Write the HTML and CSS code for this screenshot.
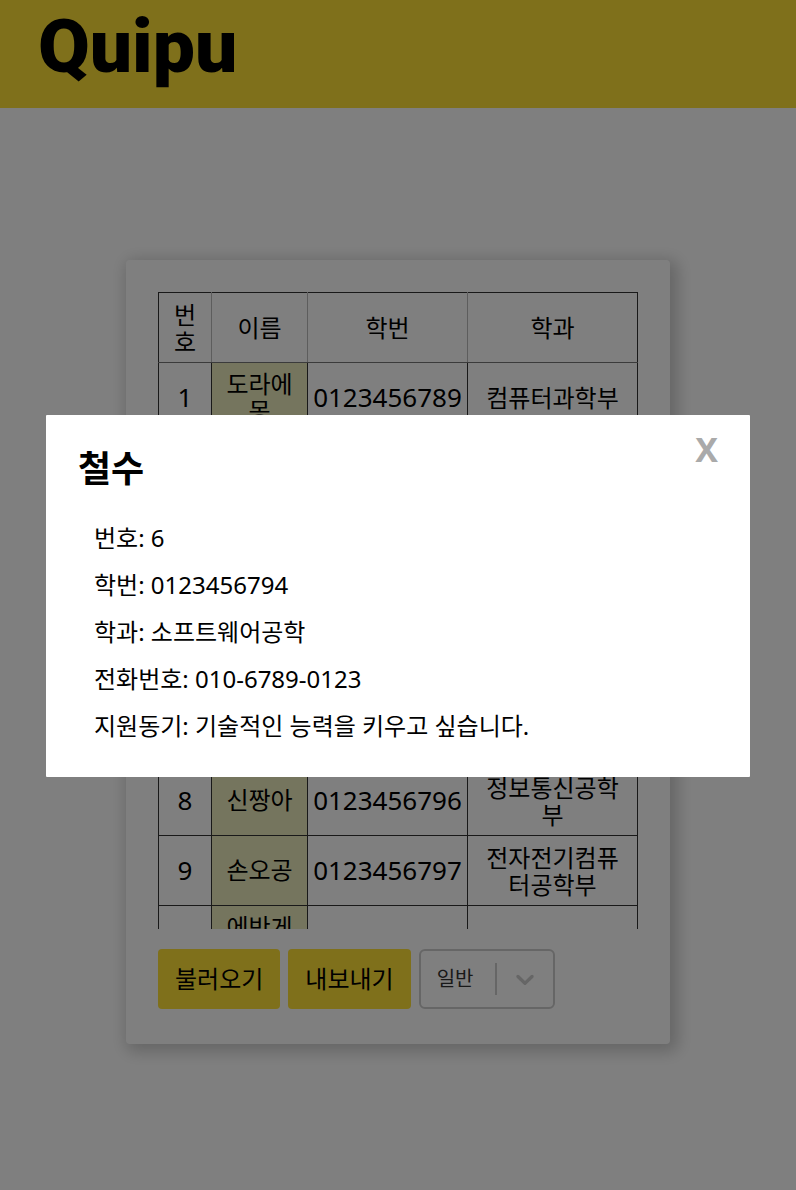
FILE: index.html
```html
<!DOCTYPE html>
<html lang="ko">
<head>
<meta charset="utf-8">
<meta name="viewport" content="width=device-width, initial-scale=1">
<title>Quipu</title>
<link rel="stylesheet" href="styles.css">
</head>
<body>
<header class="site-header"><h1 class="logo">Quipu</h1></header>
<main class="page">
  <section class="card">
    <div class="table-scroll">
      <table class="members">
        <colgroup><col class="col-no"><col class="col-name"><col class="col-id"><col class="col-dept"></colgroup>
        <thead>
          <tr class="tall"><th>번호</th><th>이름</th><th>학번</th><th>학과</th></tr>
        </thead>
        <tbody>
          <tr class="tall"><td class="num">1</td><td class="name">도라에몽</td><td class="num">0123456789</td><td>컴퓨터과학부</td></tr>
          <tr class="tall"><td class="num">2</td><td class="name">노진구</td><td class="num">0123456790</td><td>전자전기컴퓨터공학부</td></tr>
          <tr><td class="num">3</td><td class="name">신이슬</td><td class="num">0123456791</td><td>수학과</td></tr>
          <tr class="tall"><td class="num">4</td><td class="name">퉁퉁이</td><td class="num">0123456792</td><td>기계정보공학과</td></tr>
          <tr><td class="num">5</td><td class="name">짱구</td><td class="num">0123456793</td><td>통계학과</td></tr>
          <tr class="tall"><td class="num">6</td><td class="name">철수</td><td class="num">0123456794</td><td>소프트웨어공학</td></tr>
          <tr><td class="num">7</td><td class="name">유리</td><td class="num">0123456795</td><td>물리학과</td></tr>
          <tr class="tall"><td class="num">8</td><td class="name">신짱아</td><td class="num">0123456796</td><td>정보통신공학부</td></tr>
          <tr class="tall"><td class="num">9</td><td class="name">손오공</td><td class="num">0123456797</td><td>전자전기컴퓨터공학부</td></tr>
          <tr class="tall"><td class="num">10</td><td class="name">에반게리온</td><td class="num">0123456798</td><td>컴퓨터과학부</td></tr>
        </tbody>
      </table>
    </div>
    <div class="toolbar">
      <button class="btn" type="button">불러오기</button>
      <button class="btn" type="button">내보내기</button>
      <div class="picker">
        <select class="picker-select" aria-label="구분"><option>일반</option></select>
        <span class="picker-line"></span>
        <svg class="picker-arrow" viewBox="0 0 20 20" aria-hidden="true"><path d="M4.516 7.548c0.436-0.446 1.043-0.481 1.576 0l3.908 3.747 3.908-3.747c0.533-0.481 1.141-0.446 1.574 0 0.436 0.445 0.408 1.197 0 1.615-0.406 0.418-4.695 4.502-4.695 4.502-0.217 0.223-0.502 0.335-0.787 0.335s-0.57-0.112-0.789-0.335c0 0-4.287-4.084-4.695-4.502s-0.436-1.17 0-1.615z"/></svg>
      </div>
    </div>
  </section>
</main>
<div class="overlay">
  <div class="modal" role="dialog" aria-modal="true" aria-labelledby="modal-title">
    <div class="modal-head">
      <h2 class="modal-title" id="modal-title">철수</h2>
      <button class="close" type="button" aria-label="닫기">X</button>
    </div>
    <div class="details">
      <p>번호: 6</p>
      <p>학번: 0123456794</p>
      <p>학과: 소프트웨어공학</p>
      <p>전화번호: 010-6789-0123</p>
      <p>지원동기: 기술적인 능력을 키우고 싶습니다.</p>
    </div>
  </div>
</div>
</body>
</html>
```

FILE: styles.css
```css
* { box-sizing: border-box; }

body {
  margin: 0;
  min-height: 100vh;
  background: #fff;
  color: #000;
  font: 24px/28px "Noto Sans", "Noto Sans CJK KR", sans-serif;
}

h1, h2, p { margin: 0; }

button, select { font: inherit; color: inherit; cursor: pointer; }

.site-header {
  height: 108px;
  padding: 0 38px;
  background: #ffe036;
}

.logo {
  font: 900 75px/92px Roboto, sans-serif;
}

.page {
  display: flex;
  justify-content: center;
  padding: 152px 24px 0;
}

.card {
  width: 100%;
  max-width: 544px;
  padding: 32px 32px 35px;
  border-radius: 4px;
  background: #fff;
  box-shadow: 4px 4px 16px 4px rgba(0, 0, 0, 0.2);
}

.table-scroll {
  height: 637px;
  overflow: hidden;
}

.members {
  width: 100%;
  table-layout: fixed;
  border-collapse: collapse;
  text-align: center;
  word-break: break-all;
}

.col-no { width: 53px; }
.col-name { width: 96px; }
.col-id { width: 160px; }

.members tr { height: 41px; }
.members .tall { height: 70px; }

.members th, .members td {
  padding: 0 6px;
  border: 1px solid #333;
  font-weight: 400;
  line-height: 27px;
}

.members th {
  border-right-color: #bbb;
  border-bottom-color: #777;
  border-left-color: #bbb;
}

.members th:first-child { border-left-color: #333; }
.members th:last-child { border-right-color: #333; }

.members th:last-child, .members td:last-child { padding: 0 10px; }
.members .name { padding-bottom: 2px; background: #eaeabc; }
.members .num { padding: 0; font-size: 26px; }

.toolbar {
  display: flex;
  gap: 8px;
  margin-top: 20px;
}

.btn {
  height: 60px;
  padding: 0 17px;
  border: 0;
  border-radius: 4px;
  background: #ffe036;
}

.picker {
  position: relative;
  width: 136px;
  height: 60px;
}

.picker-select {
  width: 100%;
  height: 100%;
  padding: 0 16px;
  border: 2px solid #ccc;
  border-radius: 6px;
  background: transparent;
  appearance: none;
  color: #333;
  font-size: 20px;
}

.picker-line {
  position: absolute;
  top: 14px;
  right: 58px;
  width: 2px;
  height: 32px;
  background: #ccc;
}

.picker-arrow {
  position: absolute;
  top: 15px;
  right: 15px;
  width: 30px;
  fill: #ccc;
  pointer-events: none;
}

.overlay {
  position: fixed;
  inset: 0;
  display: flex;
  align-items: center;
  justify-content: center;
  padding: 26px 24px 24px;
  background: rgba(0, 0, 0, 0.5);
}

.modal {
  width: 100%;
  max-width: 704px;
  padding: 32px 32px 36px;
  border-radius: 1px;
  background: #fff;
}

.modal-head {
  display: flex;
  align-items: flex-start;
  justify-content: space-between;
}

.modal-title {
  font: 700 36px/38px "Noto Sans CJK KR", sans-serif;
}

.close {
  padding: 0;
  border: 0;
  background: none;
  color: #aaa;
  font-size: 34px;
  font-weight: 700;
  line-height: 4px;
}

.details {
  display: grid;
  gap: 16px;
  margin-top: 37px;
  padding: 0 16px;
  line-height: 31px;
}
```
